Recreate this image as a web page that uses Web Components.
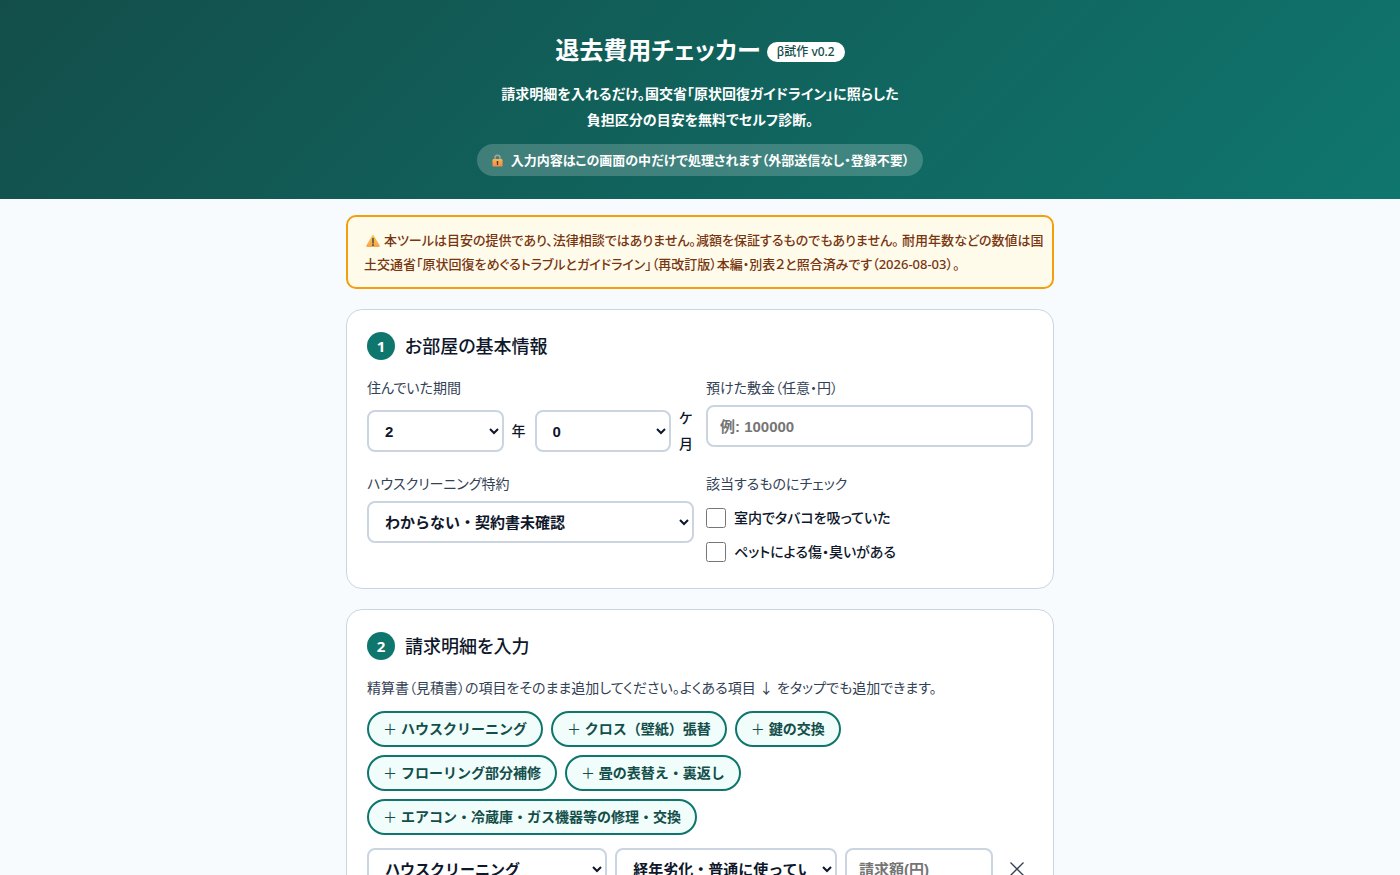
<!DOCTYPE html>
<html lang="ja">
<head>
<meta charset="utf-8">
<meta name="viewport" content="width=device-width, initial-scale=1">
<title>退去費用チェッカー</title>
<style>
  body {
    margin: 0;
    background: #f8fbfd;
    color: #0f172a;
    font: 500 14px/26px "Noto Sans", "Noto Sans CJK JP", sans-serif;
    font-feature-settings: "palt";
    --teal: #0f766e;
    --teal-dark: #134e4a;
    --line: #cbd5e1;
    --muted: #334155;
    --control-font: 600 15px/24px "Liberation Sans", "Noto Sans CJK JP", sans-serif;
  }
  main { max-width: 708px; margin: 0 auto; padding: 16px 16px 40px; display: grid; gap: 20px; }
</style>
</head>
<body>
<checker-header></checker-header>
<main>
  <notice-box>本ツールは目安の提供であり、法律相談ではありません。減額を保証するものでもありません。 耐用年数などの数値は国土交通省「原状回復をめぐるトラブルとガイドライン」（再改訂版）本編・別表２と照合済みです（2026-08-03）。</notice-box>
  <step-card>
    <span slot="number">1</span><span slot="title">お部屋の基本情報</span>
    <room-form></room-form>
  </step-card>
  <step-card>
    <span slot="number">2</span><span slot="title">請求明細を入力</span>
    <charge-editor></charge-editor>
  </step-card>
</main>
<script>
const define = (name, html) => {
  const template = document.createElement('template');
  template.innerHTML = html;
  customElements.define(name, class extends HTMLElement {
    constructor() {
      super();
      this.attachShadow({ mode: 'open' }).append(template.content.cloneNode(true));
    }
  });
};

const controls = `
  select, input:not([type=checkbox]) {
    box-sizing: border-box; width: 100%; min-width: 0; height: 42px;
    padding: 0 12px; border: 2px solid var(--line); border-radius: 8px;
    background: #fff; color: #0f172a; font: var(--control-font);
    font-feature-settings: normal;
  }
  input::placeholder { color: #757575; }
`;

define('checker-header', `
  <style>
    :host { display: block; padding: 27px 16px 23px; text-align: center; color: #fff;
      background: linear-gradient(135deg, var(--teal-dark), var(--teal)); }
    h1 { margin: 0; font-size: 24px; line-height: 46px; font-weight: 700; }
    .badge { display: inline-block; padding: 0 10px; border-radius: 10px; background: #fff;
      color: var(--teal-dark); font-size: 12px; line-height: 20px; font-weight: 500; vertical-align: middle; }
    p { margin: 8px 0 11px; font-weight: 600; }
    .privacy { display: inline-flex; align-items: center; gap: 7px; padding: 0 14px; border-radius: 16px;
      background: rgb(255 255 255 / .2); font-size: 13px; line-height: 32px; font-weight: 600; vertical-align: top; }
    svg { display: block; }
  </style>
  <h1>退去費用チェッカー <span class="badge">β試作 v0.2</span></h1>
  <p>請求明細を入れるだけ。国交省「原状回復ガイドライン」に照らした<br>負担区分の目安を無料でセルフ診断。</p>
  <div class="privacy">
    <svg width="13" height="13" viewBox="0 0 13 13" aria-hidden="true">
      <defs><linearGradient id="g" x2="0" y2="1"><stop stop-color="#f7b84b"/><stop offset="1" stop-color="#f08a4b"/></linearGradient></defs>
      <path d="M4 6V3.8a2.5 2.5 0 0 1 5 0V6" fill="none" stroke="#a7a5a3" stroke-width="1.4"/>
      <rect x="1.5" y="5" width="10" height="7.6" rx="1.2" fill="url(#g)"/>
      <path d="M6.5 7a1 1 0 0 1 .6 1.8V11H5.9V8.8A1 1 0 0 1 6.5 7z" fill="#4b3434"/>
    </svg>
    <span>入力内容はこの画面の中だけで処理されます（外部送信なし・登録不要）</span>
  </div>
`);

define('notice-box', `
  <style>
    :host { display: block; padding: 11px 8px 11px 16px; border: 2px solid #f59e0b; border-radius: 10px;
      background: #fffbeb; color: #78350f; font-size: 13px; line-height: 24px; }
    svg { margin: 0 4px 0 2px; vertical-align: -3px; }
  </style>
  <svg width="14" height="14" viewBox="0 0 14 14" aria-hidden="true">
    <defs><linearGradient id="w" x2="0" y2="1"><stop stop-color="#f6c84f"/><stop offset="1" stop-color="#f7a34f"/></linearGradient></defs>
    <path d="M6.2 1.5q.8-1.2 1.6 0l5.8 10q.5 1.3-.8 1.5H1.2Q-.1 12.8.4 11.5z" fill="url(#w)"/>
    <path d="M7 4.5v4.5" stroke="#4a3f43" stroke-width="1.4" stroke-linecap="round"/>
    <circle cx="7" cy="11" r=".9" fill="#4a3f43"/>
  </svg><slot></slot>
`);

define('step-card', `
  <style>
    :host { display: block; padding: 20px 20px 19px; border: 1px solid var(--line); border-radius: 16px; background: #fff; }
    h2 { display: flex; align-items: center; gap: 10px; margin: 0 0 13px; font-size: 18px; line-height: 32px; font-weight: 500; }
    .number { width: 28px; line-height: 28px; border-radius: 50%; background: var(--teal); color: #fff;
      text-align: center; font-size: 15px; font-weight: 700; }
  </style>
  <h2><span class="number"><slot name="number"></slot></span><slot name="title"></slot></h2>
  <slot></slot>
`);

define('room-form', `
  <style>
    :host { display: block; }
    ${controls}
    form { display: grid; grid-template-columns: 1fr 1fr; gap: 14px 12px; }
    fieldset { margin: 0; padding: 0; border: 0; min-width: 0; }
    legend { padding: 0; }
    legend, .name { display: block; margin-bottom: 5px; color: var(--muted); font-size: 14px; line-height: 25px; font-weight: 400; }
    .period { display: flex; align-items: center; gap: 8px; }
    .period select { flex: 1; }
    .period label { flex: none; width: 15px; }
    .check { display: flex; align-items: center; gap: 8px; line-height: 26px; padding: 4px 0; }
    .check input { flex: none; width: 20px; height: 20px; margin: 0; }
  </style>
  <form>
    <fieldset>
      <legend>住んでいた期間</legend>
      <div class="period">
        <select id="years"><option>0</option><option>1</option><option selected>2</option><option>3</option></select>
        <label for="years">年</label>
        <select id="months"><option>0</option><option>1</option><option>2</option></select>
        <label for="months">ケ月</label>
      </div>
    </fieldset>
    <div>
      <label class="name" for="deposit">預けた敷金（任意・円）</label>
      <input id="deposit" inputmode="numeric" placeholder="例: 100000">
    </div>
    <div>
      <label class="name" for="cleaning">ハウスクリーニング特約</label>
      <select id="cleaning"><option>わからない・契約書未確認</option><option>あり</option><option>なし</option></select>
    </div>
    <fieldset>
      <legend>該当するものにチェック</legend>
      <label class="check"><input type="checkbox">室内でタバコを吸っていた</label>
      <label class="check"><input type="checkbox">ペットによる傷・臭いがある</label>
    </fieldset>
  </form>
`);

define('quick-chip', `
  <style>
    :host { display: block; }
    button { display: block; box-sizing: border-box; height: 36px; padding: 0 14px; border: 2px solid var(--teal);
      border-radius: 18px; background: #f0fdfa; color: var(--teal-dark); cursor: pointer;
      font: 600 14px/20px "Liberation Sans", "Noto Sans CJK JP", sans-serif; font-feature-settings: normal; }
    .plus { font-weight: 400; }
  </style>
  <button type="button"><span class="plus">＋</span> <slot></slot></button>
`);

define('charge-row', `
  <style>
    :host { display: grid; grid-template-columns: 13fr 12fr 8fr 32px; gap: 8px; align-items: center; }
    ${controls}
    button { display: grid; place-items: center; height: 42px; padding: 0; border: 0; background: none; color: var(--muted); cursor: pointer; }
  </style>
  <select aria-label="項目"><option>ハウスクリーニング</option><option>鍵の交換</option></select>
  <select aria-label="原因"><option>経年劣化・普通に使っていた</option><option>不注意</option></select>
  <input aria-label="請求額" inputmode="numeric" placeholder="請求額(円)">
  <button type="button" aria-label="削除">
    <svg width="14" height="14" viewBox="0 0 14 14" aria-hidden="true"><path d="M.5.5l13 13M13.5.5l-13 13" stroke="currentColor" stroke-width="1.3"/></svg>
  </button>
`);

define('charge-editor', `
  <style>
    :host { display: block; }
    p { margin: 0 0 11px; color: var(--muted); font-size: 14px; line-height: 25px; font-weight: 400; }
    .chips { display: flex; flex-wrap: wrap; gap: 8px; margin-bottom: 13px; }
  </style>
  <p>精算書（見積書）の項目をそのまま追加してください。よくある項目 ↓ をタップでも追加できます。</p>
  <div class="chips">
    <quick-chip>ハウスクリーニング</quick-chip>
    <quick-chip>クロス（壁紙）張替</quick-chip>
    <quick-chip>鍵の交換</quick-chip>
    <quick-chip>フローリング部分補修</quick-chip>
    <quick-chip>畳の表替え・裏返し</quick-chip>
    <quick-chip>エアコン・冷蔵庫・ガス機器等の修理・交換</quick-chip>
  </div>
  <charge-row></charge-row>
`);
</script>
</body>
</html>
